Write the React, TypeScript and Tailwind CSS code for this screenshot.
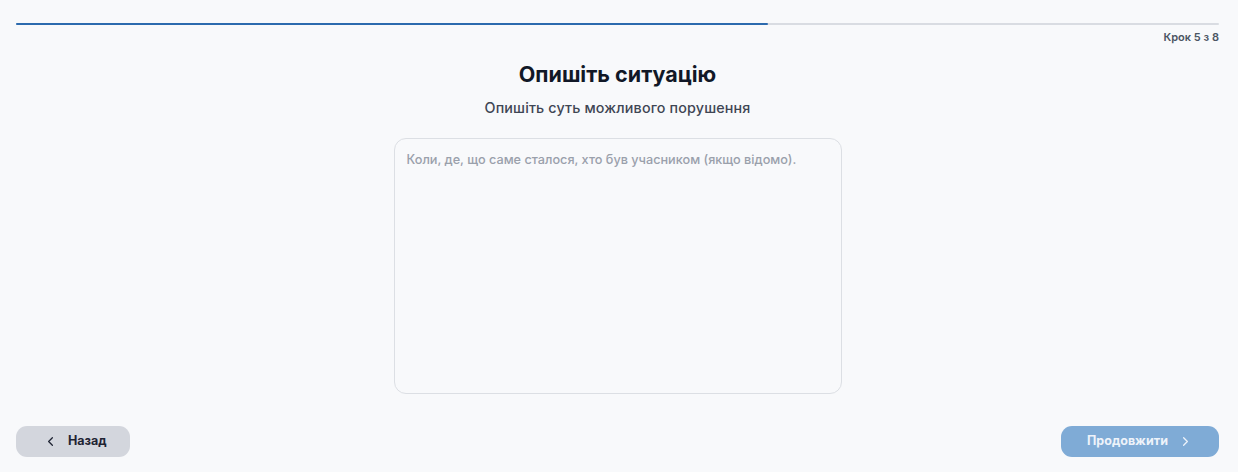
import { ChevronLeft, ChevronRight } from "lucide-react";

export default function App() {
  const step = 5;
  const total = 8;
  return (
    <div
      className="w-full h-[472px] bg-[#f8f9fb] pl-4 pr-[19px] flex flex-col"
      style={{ fontFamily: "Inter, 'Noto Sans', sans-serif" }}
    >
      <div className="pt-[23px]">
        <div className="h-[2px] w-full bg-[#d9dce2] rounded-full">
          <div
            className="h-[2px] bg-[#2c6aae] rounded-full"
            style={{ width: `${(step / total) * 100}%` }}
          />
        </div>
      </div>
      <div className="mt-[5px] text-right text-[11px] leading-[14px] font-semibold text-[#4b5563]">
        Крок {step} з {total}
      </div>

      <h1 className="mt-[16px] text-center text-[21.5px] leading-[28px] font-bold text-[#111827]">
        Опишіть ситуацію
      </h1>
      <p className="mt-[10px] text-center text-[14.3px] leading-[20px] font-medium tracking-[0.15px] text-[#3f4654]">
        Опишіть суть можливого порушення
      </p>

      <div className="mt-[20px] flex justify-center">
        <textarea
          className="w-[448px] h-[256px] resize-none rounded-[12px] border border-[#dcdfe4] bg-[#f8f9fb] px-[12px] py-[12px] text-[12.7px] leading-[18px] font-medium text-[#111827] placeholder:text-[#9aa0ab] outline-none"
          placeholder="Коли, де, що саме сталося, хто був учасником (якщо відомо)."
        />
      </div>

      <div className="mt-[32px] flex justify-between">
        <button className="w-[114px] h-[31px] rounded-[11px] bg-[#d3d6dd] flex items-center pl-[27px] gap-[10px] text-[12.5px] font-bold text-[#1f2433]">
          <ChevronLeft size={15} strokeWidth={2} />
          <span>Назад</span>
        </button>
        <button className="w-[158px] h-[31px] rounded-[11px] bg-[#7fabd6] flex items-center pl-[26px] gap-[10px] text-[12.5px] font-bold text-[#eef3fa]">
          <span>Продовжити</span>
          <ChevronRight size={15} strokeWidth={2} />
        </button>
      </div>
    </div>
  );
}
